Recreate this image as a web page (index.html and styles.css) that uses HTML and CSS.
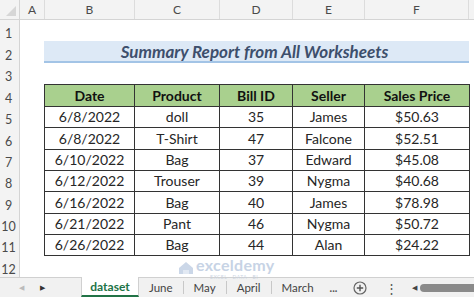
FILE: index.html
```html
<!DOCTYPE html>
<html>
<head>
<meta charset="utf-8">
<link rel="stylesheet" href="styles.css">
</head>
<body>
<div class="app">
  <div class="colheads">
    <div class="corner"><span class="tri"></span></div>
    <div class="ch w-a">A</div>
    <div class="ch w-b">B</div>
    <div class="ch w-c">C</div>
    <div class="ch w-d">D</div>
    <div class="ch w-e">E</div>
    <div class="ch w-f">F</div>
    <div class="ch w-g"></div>
  </div>
  <div class="main">
    <div class="rowheads">
      <div class="rh h21">1</div>
      <div class="rh h22">2</div>
      <div class="rh h21">3</div>
      <div class="rh h22">4</div>
      <div class="rh h21">5</div>
      <div class="rh h22">6</div>
      <div class="rh h21">7</div>
      <div class="rh h21">8</div>
      <div class="rh h22">9</div>
      <div class="rh h21">10</div>
      <div class="rh h21">11</div>
      <div class="rh h22">12</div>
    </div>
    <div class="cells">
      <div class="spacer h21"></div>
      <div class="title h22">Summary Report from All Worksheets</div>
      <div class="spacer h21"></div>
      <table class="report">
        <colgroup>
          <col class="cb"><col class="cc"><col class="cd"><col class="ce"><col class="cf">
        </colgroup>
        <tr class="head h22"><th>Date</th><th>Product</th><th>Bill ID</th><th>Seller</th><th>Sales Price</th></tr>
        <tr class="h21"><td>6/8/2022</td><td>doll</td><td>35</td><td>James</td><td>$50.63</td></tr>
        <tr class="h22"><td>6/8/2022</td><td>T-Shirt</td><td>47</td><td>Falcone</td><td>$52.51</td></tr>
        <tr class="h21"><td>6/10/2022</td><td>Bag</td><td>37</td><td>Edward</td><td>$45.08</td></tr>
        <tr class="h21"><td>6/12/2022</td><td>Trouser</td><td>39</td><td>Nygma</td><td>$40.68</td></tr>
        <tr class="h22"><td>6/16/2022</td><td>Bag</td><td>40</td><td>James</td><td>$78.98</td></tr>
        <tr class="h21"><td>6/21/2022</td><td>Pant</td><td>46</td><td>Nygma</td><td>$50.72</td></tr>
        <tr class="h21"><td>6/26/2022</td><td>Bag</td><td>44</td><td>Alan</td><td>$24.22</td></tr>
      </table>
    </div>
  </div>
  <div class="tabbar">
    <div class="nav">
      <span class="arrow dim">&#9664;</span>
      <span class="arrow">&#9654;</span>
    </div>
    <div class="tab active">dataset</div>
    <div class="tab">June</div>
    <div class="sep"></div>
    <div class="tab">May</div>
    <div class="sep"></div>
    <div class="tab">April</div>
    <div class="sep"></div>
    <div class="tab">March</div>
    <div class="more">...</div>
    <div class="add">
      <svg width="14" height="14" viewBox="0 0 14 14"><circle cx="7" cy="7" r="6" fill="none" stroke="#666" stroke-width="1.2"/><path d="M7 3.8v6.4M3.8 7h6.4" stroke="#555" stroke-width="1.4"/></svg>
    </div>
    <div class="vdots">&#8942;</div>
    <div class="scroll">
      <span class="sarrow">&#9664;</span>
      <span class="thumb"></span>
    </div>
  </div>
  <div class="watermark">
    <svg class="wm-logo" width="16" height="14" viewBox="0 0 16 14"><path d="M1 7 L8 1 L15 7 L15 13 L1 13 Z" fill="#c6d3e6"/><path d="M5 13 V9 H11 V13" fill="#dfe7f2"/></svg>
    <div class="wm-text">
      <span class="wm-name">exceldemy</span>
      <span class="wm-sub">EXCEL · DATA · BI</span>
    </div>
  </div>
</div>
</body>
</html>
```

FILE: styles.css
```css
* { box-sizing: border-box; }
html, body { margin: 0; padding: 0; }
body {
  width: 474px;
  height: 297px;
  overflow: hidden;
  background: #ffffff;
  font-family: Lato, "Open Sans", sans-serif;
}
.app {
  position: relative;
  width: 474px;
  height: 297px;
  display: flex;
  flex-direction: column;
}
.colheads {
  display: flex;
  height: 20px;
  background: #f3f3f3;
  border-bottom: 1px solid #d4d4d4;
  flex: none;
}
.corner {
  width: 20px;
  position: relative;
  border-right: 1px solid #d4d4d4;
}
.tri {
  position: absolute;
  right: 3px;
  bottom: 3px;
  width: 0;
  height: 0;
  border-left: 10px solid transparent;
  border-bottom: 10px solid #d6d6d6;
}
.ch {
  display: flex;
  align-items: center;
  justify-content: center;
  font-size: 12px;
  color: #4a4a4a;
  border-right: 1px solid #dcdcdc;
}
.w-a { width: 25px; }
.w-b { width: 90px; }
.w-c { width: 85px; }
.w-d { width: 73px; }
.w-e { width: 72px; }
.w-f { width: 104px; }
.w-g { flex: 1; border-right: none; }

.main {
  display: flex;
  flex: none;
  height: 257px;
}
.rowheads {
  width: 20px;
  background: #f3f3f3;
  border-right: 1px solid #d4d4d4;
  display: flex;
  flex-direction: column;
}
.rh {
  display: flex;
  align-items: flex-end;
  justify-content: center;
  font-size: 12.5px;
  line-height: 14px;
  color: #4a4a4a;
  padding-right: 2px;
}
.h21 { height: 21px; }
.h22 { height: 22px; }

.cells {
  flex: 1;
  padding-left: 24px;
  display: flex;
  flex-direction: column;
}
.title {
  width: 425px;
  background: #dde9f6;
  border-bottom: 2px solid #a3c4e6;
  display: flex;
  align-items: center;
  justify-content: center;
  font-weight: bold;
  font-style: italic;
  font-size: 17px;
  color: #3d4f6c;
  padding-right: 4px;
}
.report {
  border-collapse: collapse;
  table-layout: fixed;
  width: 425px;
}
.cb { width: 90px; }
.cc { width: 85px; }
.cd { width: 73px; }
.ce { width: 72px; }
.cf { width: 105px; }
.report th, .report td {
  border: 1px solid #333;
  padding: 0;
  text-align: center;
  vertical-align: middle;
  font-size: 14px;
  line-height: 16px;
  color: #262626;
}
.report th {
  background: #a9d08e;
  font-weight: bold;
  color: #111;
}

.tabbar {
  flex: 1;
  display: flex;
  align-items: stretch;
  background: #f1f1f1;
  border-top: 1px solid #d0d0d0;
  font-size: 11.5px;
  color: #444;
}
.nav {
  width: 81px;
  display: flex;
  align-items: center;
  gap: 16px;
  padding-left: 19px;
}
.arrow {
  font-size: 7px;
  color: #333;
}
.arrow.dim { color: #bbb; }
.tab {
  display: flex;
  align-items: center;
  padding: 0 10px;
}
.tab.active {
  width: 58px;
  justify-content: center;
  background: #ffffff;
  color: #217346;
  font-weight: bold;
  font-size: 12px;
  border-left: 1px solid #d0d0d0;
  border-right: 1px solid #d0d0d0;
  border-bottom: 2px solid #217346;
  margin-top: -1px;
}
.sep {
  width: 1px;
  margin: 3px 0;
  background: #c8c8c8;
}
.more {
  display: flex;
  align-items: center;
  padding: 0 10px 0 6px;
  color: #555;
  font-weight: bold;
  font-size: 11px;
}
.add {
  display: flex;
  align-items: center;
  padding: 0 8px 0 6px;
}
.vdots {
  display: flex;
  align-items: center;
  padding: 0 10px;
  color: #555;
  font-size: 13px;
}
.scroll {
  flex: 1;
  display: flex;
  align-items: center;
  gap: 3px;
  padding-left: 4px;
}
.sarrow { font-size: 7px; color: #444; }
.thumb {
  flex: 1;
  height: 8px;
  background: #8a8a8a;
  border-radius: 4px 0 0 4px;
}
.watermark {
  position: absolute;
  left: 178px;
  top: 257px;
  display: flex;
  align-items: flex-start;
  gap: 2px;
  opacity: 0.9;
}
.wm-logo { margin-top: 4px; }
.wm-text {
  display: flex;
  flex-direction: column;
}
.wm-name {
  font-size: 16px;
  line-height: 16px;
  font-weight: bold;
  color: #c2cfe3;
  letter-spacing: 0.3px;
}
.wm-sub {
  font-size: 5px;
  line-height: 5px;
  margin-top: 2px;
  color: #c8d2e2;
  letter-spacing: 0.5px;
  padding-left: 14px;
}
```
